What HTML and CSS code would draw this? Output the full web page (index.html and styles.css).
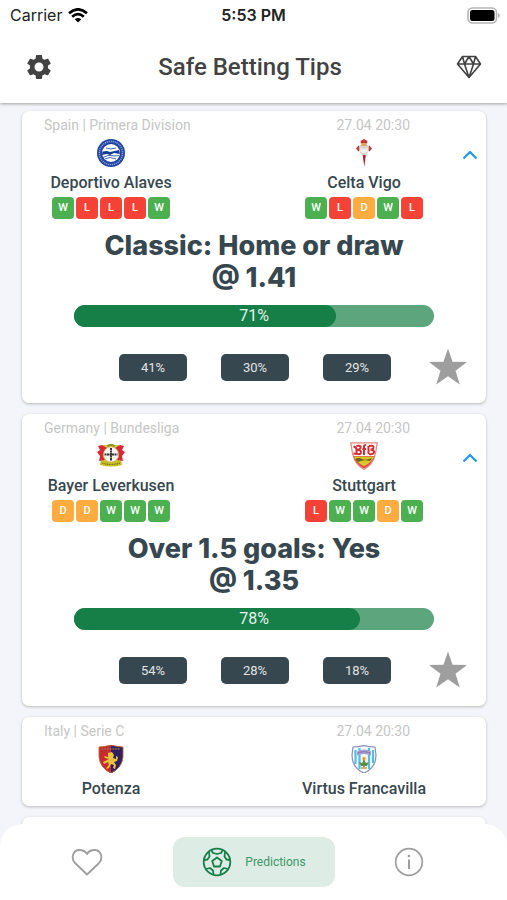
FILE: index.html
```html
<!DOCTYPE html>
<html lang="en">
<head>
<meta charset="utf-8">
<meta name="viewport" content="width=device-width, initial-scale=1">
<title>Safe Betting Tips</title>
<link rel="stylesheet" href="styles.css">
</head>
<body>
<header class="header">
  <div class="status">
    <div class="carrier">Carrier
      <svg width="20" height="15" viewBox="0 0 20 15" fill="none" stroke="#000" stroke-width="2.6"><path d="M1 5.2Q10-2.6 19 5.2M4.200 8.700Q10 3.600 15.800 8.700"/><path d="M10 14.500 6.700 11.200Q10 8.600 13.300 11.200Z" fill="#000" stroke="none"/></svg>
    </div>
    <div class="time">5:53 PM</div>
    <svg class="battery" width="33" height="17" viewBox="0 0 33 17"><rect x="1" y="1" width="28.500" height="15" rx="4.500" fill="#fff" stroke="#b5b5b5" stroke-width="1.600"/><rect x="3" y="3" width="24.500" height="11" rx="2.500"/><path d="M31 6q1.800.6 1.800 2.500T31 11z" fill="#b5b5b5"/></svg>
  </div>
  <div class="toolbar">
    <button class="icon-button" aria-label="Settings"><svg width="30" height="30" viewBox="0 0 24 24" fill="#424242"><path d="M19.140 12.940c.04-.3.06-.61.06-.94 0-.32-.02-.64-.07-.94l2.030-1.580c.18-.14.23-.41.12-.61l-1.920-3.320c-.12-.22-.37-.29-.59-.22l-2.390.96c-.5-.38-1.030-.7-1.620-.94l-.36-2.540c-.04-.24-.24-.41-.48-.41h-3.840c-.24 0-.43.17-.47.41l-.36 2.540c-.59.24-1.130.57-1.620.94l-2.390-.96c-.22-.08-.47 0-.59.22L2.740 8.870c-.12.21-.08.47.12.61l2.030 1.580c-.05.3-.09.63-.09.94s.02.64.07.94l-2.030 1.580c-.18.14-.23.41-.12.61l1.920 3.320c.12.22.37.29.59.22l2.390-.96c.5.38 1.030.7 1.620.94l.36 2.540c.05.24.24.41.48.41h3.840c.24 0 .44-.17.47-.41l.36-2.540c.59-.24 1.130-.56 1.620-.94l2.390.96c.22.08.47 0 .59-.22l1.920-3.320c.12-.22.07-.47-.12-.61zM12 15.600a3.600 3.600 0 1 1 0-7.200 3.600 3.600 0 0 1 0 7.200z"/></svg></button>
    <h1 class="title">Safe Betting Tips</h1>
    <button class="icon-button" aria-label="Premium"><svg width="26" height="24" viewBox="0 0 26 24" fill="none" stroke="#424242" stroke-width="1.600" stroke-linejoin="round"><path d="M6.500 1.500h13L24.500 9 13 22.500 1.500 9zM1.500 9h23M6.500 1.500 8.500 9 13 22.500 17.500 9l2-7.500M8.500 9 13 1.500 17.500 9"/></svg></button>
  </div>
</header>

<main class="list">
  <article class="card">
    <div class="meta"><span>Spain | Primera Division</span><time>27.04 20:30</time></div>
    <div class="match">
      <div class="team">
        <svg class="crest" viewBox="0 0 28 28"><circle cx="14" cy="14" r="14" fill="#2143a3"/><circle cx="14" cy="14" r="11.600" fill="none" stroke="#8fa3d6" stroke-width="1.500" stroke-dasharray="1.200 .8"/><circle cx="14" cy="14" r="9" fill="#fff"/><path d="M5.500 12.500 10 12l3 1 9-2 1 4-6-1-4 2-3-1-5 1z" fill="#183c91"/><path d="M6 18.500q6-3 8-2 4 1 8 0M8 20q5-3 11 0M9 9q5 2 10 0" fill="none" stroke="#4967b2" stroke-width="1"/></svg>
        <h2 class="name">Deportivo Alaves</h2>
        <div class="form"><span class="win">W</span><span class="loss">L</span><span class="loss">L</span><span class="loss">L</span><span class="win">W</span></div>
      </div>
      <div class="team">
        <svg class="crest" viewBox="0 0 28 28"><path d="M12 11h4.500L14.300 28z" fill="#c62832"/><path d="m6 9.500 2.500-3 2 2h7l2-2 2.500 3-2.500 3-2-2h-7l-2 2z" fill="#bd3b43"/><path d="M10 6h8l1 3-1 5-2 2h-4l-2-2-1-5z" fill="#d9d5cc"/><path d="M10.500 9q3.500 2 7 0v4q-3.500 2-7 0z" fill="#f0f1ef"/><path d="M11 5 10.500 2 14 0l3.500 2-.5 3z" fill="#c6373a"/><path d="M11 4h6l-.5 3h-5z" fill="#dfa267"/><path d="m13.500 17 .8 7 .5-7z" fill="#941c30"/></svg>
        <h2 class="name">Celta Vigo</h2>
        <div class="form"><span class="win">W</span><span class="loss">L</span><span class="draw">D</span><span class="win">W</span><span class="loss">L</span></div>
      </div>
      <button class="toggle" aria-label="Collapse"><svg width="16" height="10" viewBox="0 0 16 10" fill="none" stroke="#2196f3" stroke-width="2.200"><path d="m1.500 8.500 6.500-6.500 6.500 6.500"/></svg></button>
    </div>
    <div class="details">
      <p class="tip">Classic: Home or draw<br>@ 1.41</p>
      <div class="progress"><div class="fill" style="--value: 0.71"></div><span class="percent">71%</span></div>
      <div class="odds">
        <div class="pills"><span class="pill">41%</span><span class="pill">30%</span><span class="pill">29%</span></div>
        <button class="favorite" aria-label="Add to favorites"><svg width="38" height="38" viewBox="0 0 38 38" fill="#9e9e9e"><path d="m19 .5 4.500 13.200 14.500.3-11.500 8.800 4.300 13.700L19 28.300 7.200 36.500l4.300-13.700L0 14l14.500-.3z"/></svg></button>
      </div>
    </div>
  </article>

  <article class="card">
    <div class="meta"><span>Germany | Bundesliga</span><time>27.04 20:30</time></div>
    <div class="match">
      <div class="team">
        <svg class="crest" viewBox="0 0 28 28"><path d="M6 3h16v20H6z" fill="#d8c64a"/><path d="M4 18q10 3 20 0l1 5q-11 3-22 0z" fill="#c9bf20"/><path d="M1 4 5 3l5 3-1 4-3 4 2 4-6 1 1-5-3-4 3-2zM27 4l-4-1-5 3 1 4 3 4-2 4 6 1-1-5 3-4-3-2z" fill="#d92735"/><circle cx="14" cy="12.500" r="7.700" fill="#f5f5f2" stroke="#b9a844" stroke-width=".7"/><path d="M14 6v13M7.500 12.500h13" stroke="#333" stroke-width="2" stroke-dasharray="2 .5"/><path d="M10 4q4-2 8 0" stroke="#8e9515" stroke-width="1.800" fill="none"/><path d="M5 21q9 3 18 0" stroke="#716c16" stroke-width="1.200" stroke-dasharray="1 .7" fill="none"/></svg>
        <h2 class="name">Bayer Leverkusen</h2>
        <div class="form"><span class="draw">D</span><span class="draw">D</span><span class="win">W</span><span class="win">W</span><span class="win">W</span></div>
      </div>
      <div class="team">
        <svg class="crest" viewBox="0 0 28 28"><path d="M.8.8h26.400q-1 7.700-2.200 12.200-2 9-11 14.500Q5 22 3 13 1.800 8.500.8.8z" fill="#fffaf5" stroke="#d98b86" stroke-width="1.200"/><path d="M3.500 14h21Q22 22 14 26.500 6 22 3.500 14z" fill="#e33a36"/><path d="M4 14.500h20Q22 20 14 24.500 6 20 4 14.500z" fill="#d9c531"/><path d="M5 17q4-2 7 0t10-1l-2 3q-6-2-12 1z" fill="#6b6418"/><path d="M3.500 4.500q3 .5 3 3v3q0 2-3 1M6.500 4q5-1 4 2-.5 1.500-3 1.800 4 .2 3.500 3-.8 2-4.500 1M16 3q-2-.5-2 2v8M12.300 7h3.800M19 4q5-1 4.500 1.500-.5 2-3 2.200 4 .2 3.500 3-.8 2-5 1.200M18.500 4v8" fill="none" stroke="#d52d36" stroke-width="2"/></svg>
        <h2 class="name">Stuttgart</h2>
        <div class="form"><span class="loss">L</span><span class="win">W</span><span class="win">W</span><span class="draw">D</span><span class="win">W</span></div>
      </div>
      <button class="toggle" aria-label="Collapse"><svg width="16" height="10" viewBox="0 0 16 10" fill="none" stroke="#2196f3" stroke-width="2.200"><path d="m1.500 8.500 6.500-6.500 6.500 6.500"/></svg></button>
    </div>
    <div class="details">
      <p class="tip">Over 1.5 goals: Yes<br>@ 1.35</p>
      <div class="progress"><div class="fill" style="--value: 0.78"></div><span class="percent">78%</span></div>
      <div class="odds">
        <div class="pills"><span class="pill">54%</span><span class="pill">28%</span><span class="pill">18%</span></div>
        <button class="favorite" aria-label="Add to favorites"><svg width="38" height="38" viewBox="0 0 38 38" fill="#9e9e9e"><path d="m19 .5 4.500 13.200 14.500.3-11.500 8.800 4.300 13.700L19 28.300 7.200 36.500l4.300-13.700L0 14l14.500-.3z"/></svg></button>
      </div>
    </div>
  </article>

  <article class="card">
    <div class="meta"><span>Italy | Serie C</span><time>27.04 20:30</time></div>
    <div class="match">
      <div class="team">
        <svg class="crest" viewBox="0 0 28 28"><path d="M2 2q6-.3 12-2v28.500Q3 23 2 12z" fill="#c72c2d"/><path d="M14 0q6 1.700 12 2v10q-1 11-12 16.500z" fill="#30215e"/><path d="M2 2q6-.3 12-1.800Q20 1.700 26 2v10q-1 11-12 16Q3 23 2 12z" fill="none" stroke="#ba6540" stroke-width=".9"/><path d="M5 4h18" stroke="#987052" stroke-width="1.600" stroke-dasharray="1 .6"/><path d="m11 8 4-1 2 3-1 3 3 1v-3l2 1-1 4-3 1 2 3-1 4-2-1 1-3-3-1-2 4-3 1 1-2 2-2-1-3-4 2-1-2 4-2 2-1-4-1-1-2 4 1z" fill="#ecc23e"/></svg>
        <h2 class="name">Potenza</h2>
      </div>
      <div class="team">
        <svg class="crest" viewBox="0 0 28 28"><path d="M3 2q6 0 11-1.500Q19 2 25 2l1 8q0 13-12 18Q2 23 2 10z" fill="#f3fbfe" stroke="#8b8ebd" stroke-width="1.200"/><path d="M5.500 5v14M9.500 3v21M19 3v21M23 5v13" stroke="#54bce9" stroke-width="2.200"/><path d="M7 6.500q7-4 14 0v4q-7-3-14 0z" fill="#a8a0cd"/><path d="M8 8q6-2.500 12 0" stroke="#655c9c" stroke-width="1" fill="none" stroke-dasharray="1 .6"/><path d="M11 11h6v11h-6z" fill="#f6efdc"/><path d="M14 13v9" stroke="#8b7438" stroke-width="1.500"/><path d="m9 17 3 1 2-3 2 3 3-1-2 4h-6z" fill="#5c8d49"/><circle cx="14" cy="13.500" r="1.600" fill="#dc9e39"/><path d="M11 23h6" stroke="#b7a243" stroke-width="1.500"/></svg>
        <h2 class="name">Virtus Francavilla</h2>
      </div>
    </div>
  </article>

  <article class="card card-pending"></article>
</main>

<nav class="tabs">
  <button class="tab" aria-label="Favorites"><svg width="32" height="28" viewBox="0 0 32 28" fill="none" stroke="#9e9e9e" stroke-width="1.800" stroke-linejoin="round"><path d="M16 26.500 4 15C-.5 10 2 2 8.500 2c3.500 0 6 1.500 7.500 4 1.500-2.500 4-4 7.500-4C30 2 32.500 10 28 15z"/></svg></button>
  <button class="tab active"><svg width="30" height="30" viewBox="0 0 30 30" fill="none" stroke="#157f47" stroke-width="1.800" stroke-linejoin="round"><circle cx="15" cy="15" r="13.300"/><path d="m15 10.500 4.800 3.500-1.800 5.500h-6L10.200 14zM9.500 3.500l1.500 2.500 4 1 4-1 1.500-2.500M2 13l3.500-.5 2-3L7 5M28 13l-3.500-.5-2-3L23 5M4 22l4-1 3 2.500.5 4.500M26 22l-4-1-3 2.500-.5 4.500"/></svg><span>Predictions</span></button>
  <button class="tab" aria-label="Information"><svg width="30" height="30" viewBox="0 0 30 30" fill="none" stroke="#9e9e9e" stroke-width="1.700"><circle cx="15" cy="15" r="13.300"/><path d="M15 12.500V22" stroke-width="2"/><circle cx="15" cy="9" r="1.300" fill="#9e9e9e" stroke="none"/></svg></button>
</nav>
</body>
</html>
```
FILE: styles.css
```css
* { box-sizing: border-box; }

body {
  display: flex;
  flex-direction: column;
  height: 100vh;
  margin: 0;
  background: #f4f5fa;
  color: #37474f;
  font-family: Roboto, sans-serif;
}

h1, h2, p { margin: 0; }

button {
  display: flex;
  align-items: center;
  justify-content: center;
  padding: 0;
  border: 0;
  background: none;
  font: inherit;
  color: inherit;
}

svg { display: block; flex: none; }

.header {
  position: relative;
  z-index: 1;
  flex: none;
  background: #fff;
  box-shadow: 0 1px 3px rgba(0, 0, 0, 0.35);
}

.status {
  display: grid;
  grid-template-columns: 1fr auto 1fr;
  align-items: center;
  height: 30px;
  padding: 0 7px;
  font-family: Inter, sans-serif;
  font-size: 16px;
  color: #222;
}

.carrier { display: flex; align-items: center; gap: 6px; padding-left: 3px; }
.time { font-weight: 600; }
.battery { justify-self: end; }

.toolbar {
  display: flex;
  align-items: center;
  height: 73px;
  padding: 0 18px 0 19px;
}

.icon-button { width: 40px; height: 40px; }

.title {
  flex: 1;
  padding-right: 8px;
  font-size: 24px;
  font-weight: 500;
  line-height: 32px;
  text-align: center;
  color: #424242;
}

.list {
  display: flex;
  flex: 1;
  flex-direction: column;
  gap: 11px;
  min-height: 0;
  padding: 8px 21px 0 22px;
  overflow-y: auto;
  scrollbar-width: none;
}

.card {
  flex: none;
  padding: 6px 0 7px;
  border-radius: 7px;
  background: #fff;
  box-shadow: 0 1px 3px rgba(0, 0, 0, 0.25);
}

.card-pending { height: 88px; }

.meta {
  display: flex;
  justify-content: space-between;
  padding: 0 76px 0 22px;
  font-size: 14px;
  line-height: 16px;
  color: #c6c6c6;
}

.match {
  display: grid;
  grid-template-columns: 1fr 75px 1fr 33px;
  margin-top: 6px;
}

.team {
  display: flex;
  flex-direction: column;
  align-items: center;
}

.team + .team { grid-column: 3; }

.crest { width: 28px; height: 28px; }

.name {
  margin-top: 6px;
  font-size: 16px;
  font-weight: 500;
  line-height: 20px;
  white-space: nowrap;
}

.form { display: flex; gap: 2px; margin-top: 4px; }

.form span {
  width: 22px;
  height: 22px;
  border-radius: 4px;
  font-size: 11px;
  font-weight: 500;
  line-height: 22px;
  text-align: center;
  color: #fff;
}

.form .win { background: #4caf50; }
.form .loss { background: #f44336; }
.form .draw { background: #ffab40; }

.toggle { grid-column: 4; height: 32px; }

.details { padding-bottom: 10px; }

.tip {
  margin-top: 11px;
  font-family: Inter, sans-serif;
  font-size: 27px;
  font-weight: 800;
  line-height: 32px;
  text-align: center;
}

.progress {
  position: relative;
  height: 22px;
  margin: 11px 52px 0;
  border-radius: 11px;
  background: #5ca57d;
  text-align: center;
}

.fill {
  position: absolute;
  inset: 0 auto 0 0;
  width: calc(22px + (100% - 22px) * var(--value));
  border-radius: 11px;
  background: #157f47;
}

.percent {
  position: relative;
  font-size: 16px;
  line-height: 22px;
  color: #e4f1e9;
}

.odds {
  display: grid;
  grid-template-columns: 1fr auto 1fr;
  align-items: center;
  margin-top: 21px;
  padding: 0 19px 0 21px;
}

.pills { display: flex; grid-column: 2; gap: 34px; }

.pill {
  width: 68px;
  border-radius: 5px;
  background: #37474f;
  font-size: 13px;
  line-height: 27px;
  text-align: center;
  color: #e0e4e6;
}

.favorite { justify-self: end; }

.tabs {
  position: fixed;
  right: 0;
  bottom: 0;
  left: 0;
  z-index: 1;
  display: grid;
  grid-template-columns: 173fr 162fr 148fr;
  padding: 13px 24px 13px 0;
  border-radius: 22px 22px 0 0;
  background: #fff;
}

.tab { height: 50px; }

.tab.active {
  gap: 13px;
  border-radius: 12px;
  background: #ddece4;
  font-size: 12px;
  color: #409769;
}
```
